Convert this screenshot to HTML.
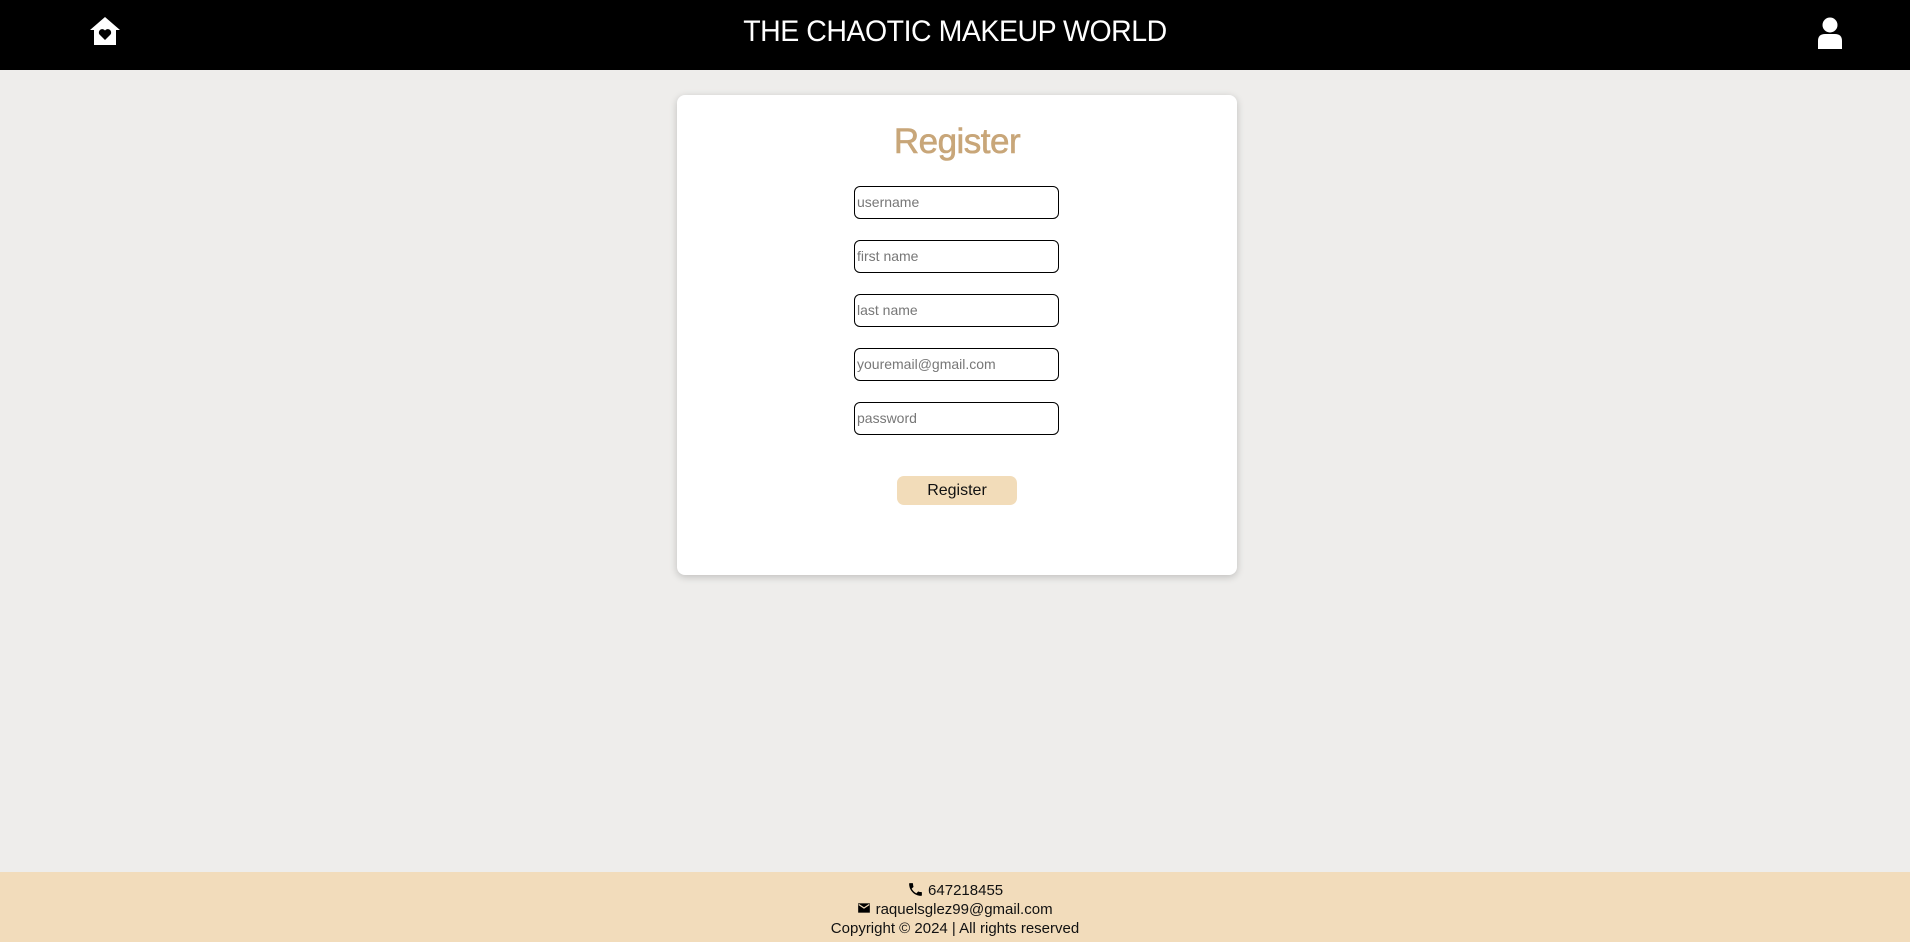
<!DOCTYPE html>
<html><head><meta charset="utf-8"><style>
*{box-sizing:border-box;margin:0;padding:0}
body{width:1910px;height:942px;background:#eeedeb;font-family:"Liberation Sans",sans-serif;position:relative;overflow:hidden}
header{position:absolute;left:0;top:0;width:1910px;height:70px;background:#000}
.title{position:absolute;left:0;width:1910px;text-align:center;top:15px;color:#fff;font-size:30px;letter-spacing:-0.5px;transform:scaleX(0.95)}
.card{position:absolute;left:677px;top:95px;width:560px;height:480px;background:#fff;border-radius:8px;box-shadow:0 2px 8px rgba(0,0,0,.2)}
h1{position:absolute;width:100%;text-align:center;top:27px;font-size:35px;font-weight:normal;color:#c8a679;letter-spacing:-0.5px;-webkit-text-stroke:0.6px #c8a679}
.in{position:absolute;left:177px;width:205px;height:33px;border:1.5px solid #000;border-radius:6px;font-size:14px;color:#777;padding:7px 2px}
.btn{position:absolute;left:220px;top:381px;width:120px;height:29px;background:#f2dcb9;border-radius:7px;text-align:center;font-size:16px;line-height:29px;color:#111}
footer{position:absolute;left:0;top:872px;width:1910px;height:70px;background:#f2dcbb;text-align:center;font-size:15px;color:#111;line-height:19px;padding-top:9px}
</style></head><body>
<header>
<svg style="position:absolute;left:89px;top:15px" width="32" height="32" viewBox="0 0 32 32"><path d="M16 2 L1 15 H5 V30 H27 V15 H31 Z" fill="#fff"/><path d="M16 25 L10.5 19.5 A3.2 3.2 0 0 1 16 15.5 A3.2 3.2 0 0 1 21.5 19.5 Z" fill="#000"/></svg>
<div class="title">THE CHAOTIC MAKEUP WORLD</div>
<svg style="position:absolute;left:1816px;top:17px" width="28" height="32" viewBox="0 0 28 32"><circle cx="14" cy="8" r="7.5" fill="#fff"/><path d="M2 32 V24 Q2 17 9 17 H19 Q26 17 26 24 V32 Z" fill="#fff"/></svg>
</header>
<div class="card">
<h1>Register</h1>
<div class="in" style="top:91px">username</div>
<div class="in" style="top:145px">first name</div>
<div class="in" style="top:199px">last name</div>
<div class="in" style="top:253px">youremail@gmail.com</div>
<div class="in" style="top:307px">password</div>
<div class="btn">Register</div>
</div>
<footer>
<div><svg width="17" height="17" viewBox="0 0 24 24" style="vertical-align:-3px"><path d="M6.6 10.8c1.4 2.8 3.8 5.1 6.6 6.6l2.2-2.2c.3-.3.7-.4 1-.2 1.1.4 2.3.6 3.6.6.6 0 1 .4 1 1V20c0 .6-.4 1-1 1C10.6 21 3 13.4 3 4c0-.6.4-1 1-1h3.5c.6 0 1 .4 1 1 0 1.3.2 2.5.6 3.6.1.3 0 .7-.2 1z" fill="#000"/></svg> 647218455</div>
<div><svg width="14" height="12" viewBox="0 0 24 20" style="vertical-align:0"><path d="M2 2h20v16H2z" fill="#000"/><path d="M3 4l9 6 9-6" stroke="#f2dcbb" stroke-width="2" fill="none"/></svg> raquelsglez99@gmail.com</div>
<div>Copyright © 2024 | All rights reserved</div>
</footer>
</body></html>
